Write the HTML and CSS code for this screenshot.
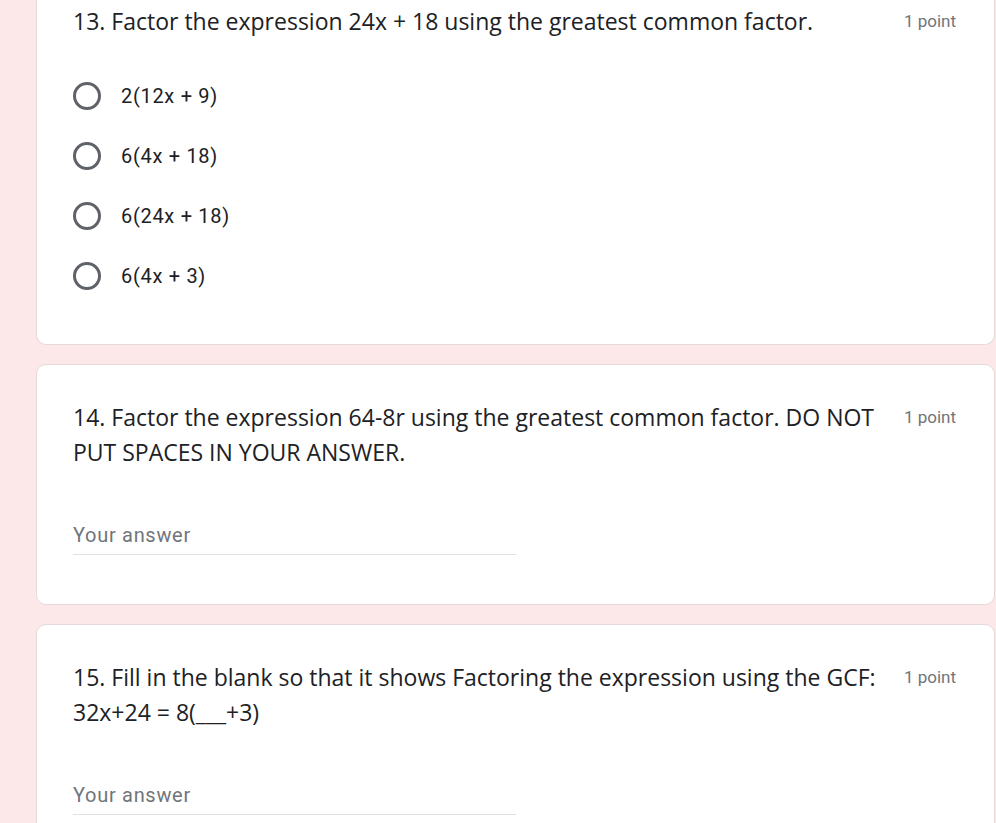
FILE: index.html
```html
<!DOCTYPE html>
<html>
<head>
<meta charset="utf-8">
<link rel="stylesheet" href="styles.css">
</head>
<body>
<div class="page">
  <div class="card card-first">
    <div class="q-head">
      <div class="q-title">13. Factor the expression 24x + 18 using the greatest common factor.</div>
      <div class="q-points">1 point</div>
    </div>
    <div class="options">
      <div class="option"><span class="radio"></span><span class="opt-label">2(12x + 9)</span></div>
      <div class="option"><span class="radio"></span><span class="opt-label">6(4x + 18)</span></div>
      <div class="option"><span class="radio"></span><span class="opt-label">6(24x + 18)</span></div>
      <div class="option"><span class="radio"></span><span class="opt-label">6(4x + 3)</span></div>
    </div>
  </div>
  <div class="card">
    <div class="q-head">
      <div class="q-title">14. Factor the expression 64-8r using the greatest common factor. DO NOT PUT SPACES IN YOUR ANSWER.</div>
      <div class="q-points">1 point</div>
    </div>
    <div class="answer"><span class="placeholder">Your answer</span></div>
  </div>
  <div class="card">
    <div class="q-head">
      <div class="q-title">15. Fill in the blank so that it shows Factoring the expression using the GCF: 32x+24 = 8(___+3)</div>
      <div class="q-points">1 point</div>
    </div>
    <div class="answer"><span class="placeholder">Your answer</span></div>
  </div>
</div>
</body>
</html>
```
FILE: styles.css
```css
html, body {
  margin: 0;
  padding: 0;
}
body {
  background: #fde8e9;
  font-family: Roboto, "Liberation Sans", sans-serif;
  color: #202124;
  overflow: hidden;
}
.page {
  display: flex;
  flex-direction: column;
  gap: 19px;
  padding: 0 1px 0 36px;
}
.card {
  background: #ffffff;
  border: 1px solid #e6d9da;
  border-radius: 10px;
  padding: 35px 38px 49px 36px;
}
.card-first {
  border-top: none;
  border-radius: 0 0 10px 10px;
  padding-top: 4px;
  padding-bottom: 38px;
}
.q-head {
  display: flex;
  align-items: flex-start;
}
.q-title {
  flex: 1;
  font-family: "Open Sans", Roboto, sans-serif;
  font-size: 23px;
  line-height: 35px;
  color: #202124;
  padding-right: 12px;
}
.q-points {
  font-size: 17px;
  line-height: 35px;
  color: #70757a;
  white-space: nowrap;
}
.options {
  display: flex;
  flex-direction: column;
  margin-top: 27px;
}
.option {
  display: flex;
  align-items: center;
  height: 60px;
}
.radio {
  width: 22px;
  height: 22px;
  border: 3px solid #5f6368;
  border-radius: 50%;
  flex: none;
}
.opt-label {
  margin-left: 20px;
  font-size: 20px;
  letter-spacing: 0.7px;
  color: #202124;
}
.answer {
  margin-top: 45px;
  width: 443px;
  height: 39px;
  border-bottom: 1px solid #e0e0e0;
  display: flex;
  align-items: center;
}
.placeholder {
  font-size: 20px;
  letter-spacing: 0.7px;
  color: #70757a;
}
```
